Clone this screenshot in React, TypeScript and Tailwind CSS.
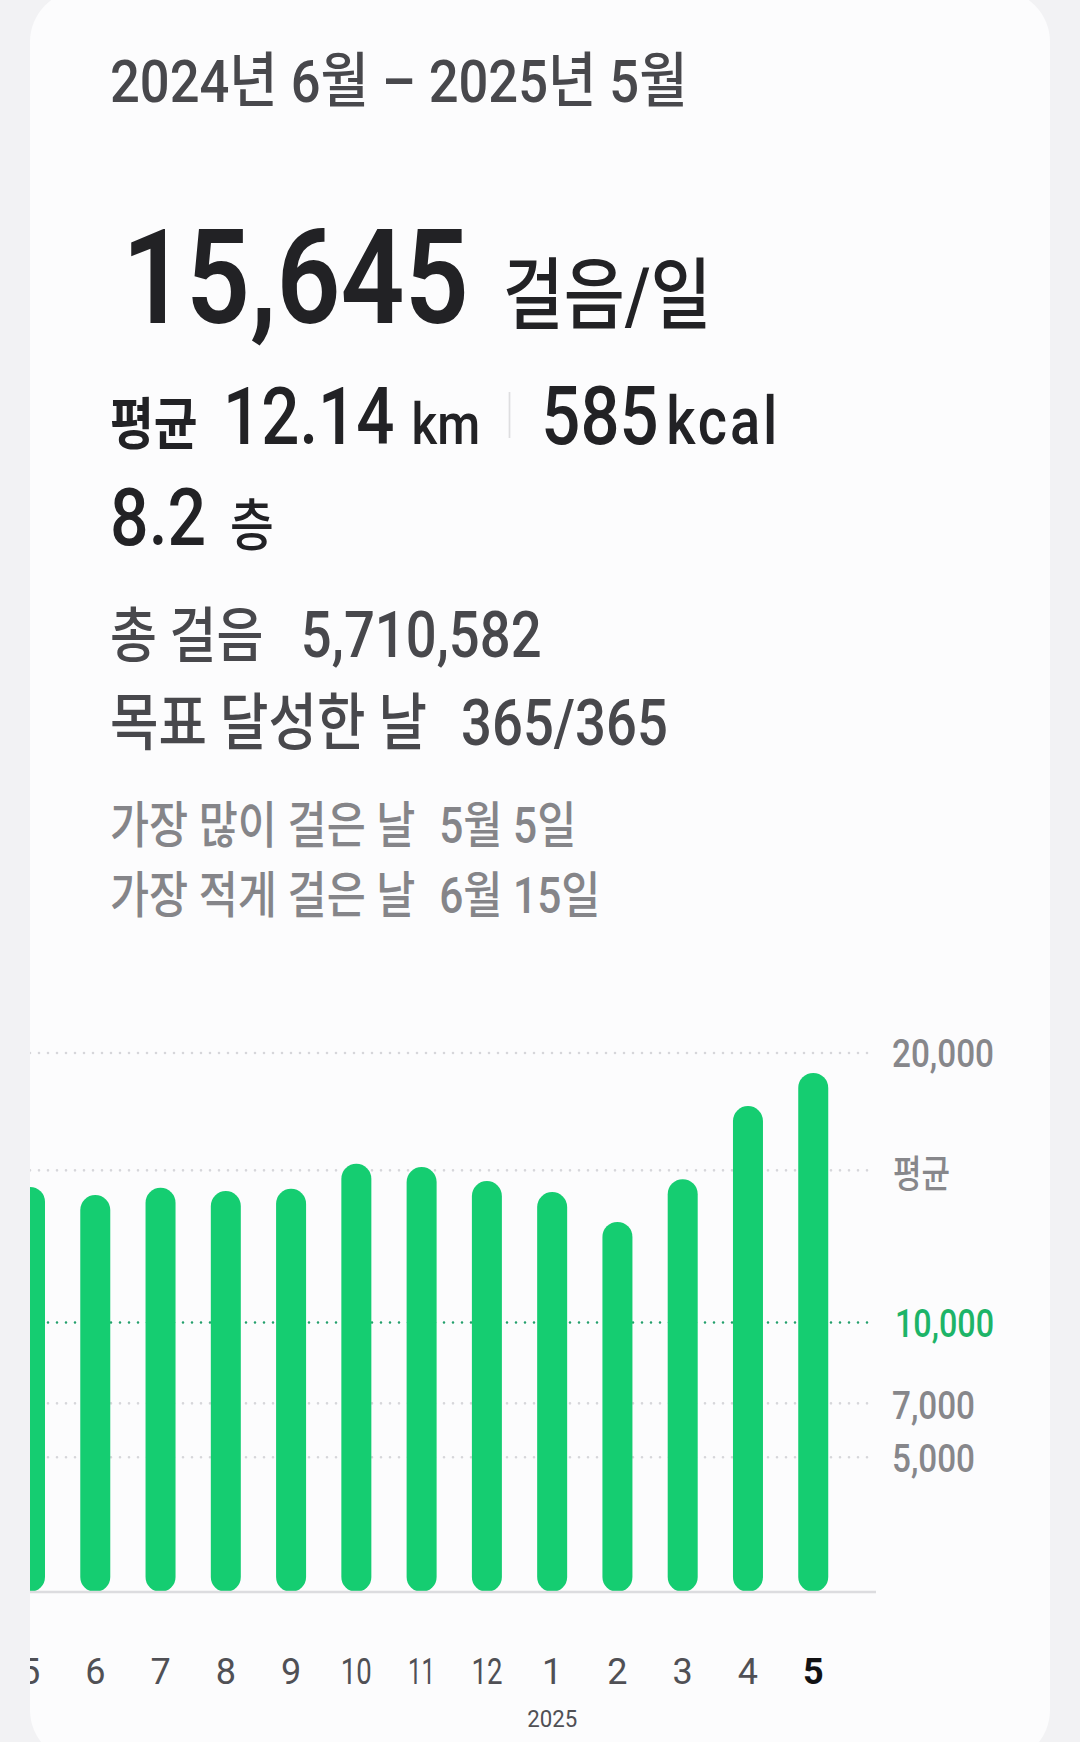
const steps = [15030, 14730, 15000, 14880, 14960, 15890, 15770, 15250, 14840, 13730, 15320, 18030, 19260];
const months = ["5", "6", "7", "8", "9", "10", "11", "12", "1", "2", "3", "4", "5"];

const BASE = 571;
const PX_PER_STEP = 539 / 20000;
const GAP = 65.27;
const y = (v: number) => BASE - v * PX_PER_STEP;

const font = "Roboto, 'Noto Sans CJK KR', sans-serif";

function Grid({ value, color }: { value: number; color: string }) {
  return (
    <line
      x1={0}
      x2={838}
      y1={y(value)}
      y2={y(value)}
      stroke={color}
      strokeWidth={2.6}
      strokeLinecap="round"
      strokeDasharray="0 9"
    />
  );
}

function Chart() {
  return (
    <svg width={1020} height={722} className="mt-[100px] block" style={{ fontFamily: font }}>
      <Grid value={20000} color="#d6d6da" />
      <Grid value={15645} color="#d6d6da" />
      <Grid value={7000} color="#d6d6da" />
      <Grid value={5000} color="#d6d6da" />
      <Grid value={10000} color="#239f6c" />

      {steps.map((v, i) => (
        <rect key={i} x={i * GAP - 15} y={y(v)} width={30} height={BASE - y(v)} rx={15} fill="#15cd71" />
      ))}
      <line x1={0} x2={846} y1={BASE} y2={BASE} stroke="#dcdcdf" strokeWidth={2.5} />

      <g fontWeight={500} fontSize={38} fill="#87878b">
        <text x={862} y={46} textLength={102} lengthAdjust="spacingAndGlyphs">20,000</text>
        <text x={863} y={166} textLength={57} lengthAdjust="spacingAndGlyphs">평균</text>
        <text x={865} y={316} fill="#1db468" textLength={99} lengthAdjust="spacingAndGlyphs">10,000</text>
        <text x={862} y={398} textLength={83} lengthAdjust="spacingAndGlyphs">7,000</text>
        <text x={862} y={451} textLength={83} lengthAdjust="spacingAndGlyphs">5,000</text>
      </g>

      <g fontSize={36} fill="#505055" textAnchor="middle">
        {months.map((m, i) => {
          const last = i === months.length - 1;
          return (
            <text
              key={i}
              x={i * GAP}
              y={663}
              fill={last ? "#111113" : undefined}
              fontWeight={last ? 700 : 400}
              textLength={m.length > 1 ? (m === "11" ? 27 : 31) : undefined}
              lengthAdjust="spacingAndGlyphs"
            >
              {m}
            </text>
          );
        })}
        <text x={8 * GAP} y={706} fontSize={24} textLength={50} lengthAdjust="spacingAndGlyphs">
          2025
        </text>
      </g>
    </svg>
  );
}

export default function App() {
  return (
    <div className="h-[1742px] overflow-hidden bg-[#f2f2f4] font-[Roboto,'Noto_Sans_CJK_KR',sans-serif]">
      <div className="mx-[30px] -mt-[10px] h-[1772px] overflow-hidden rounded-[52px] bg-[#fcfcfd]">
        <div className="pl-[80px] pt-[62px]">
          <div className="origin-left scale-x-[0.875] text-[60px] leading-none font-medium whitespace-nowrap text-[#48484c]">
            2024년 6월 – 2025년 5월
          </div>

          <div className="mt-[100px] flex origin-left scale-x-[0.85] items-baseline whitespace-nowrap text-[#222225]">
            <span className="ml-[14px] text-[132px] leading-none font-semibold">15,645</span>
            <span className="ml-[40px] text-[78px] leading-none font-medium">걸음/일</span>
          </div>

          <div className="mt-[32px] flex origin-left scale-x-[0.85] items-baseline whitespace-nowrap text-[#222225]">
            <span className="text-[56px] leading-none font-bold">평균</span>
            <span className="ml-[30px] text-[79px] leading-none font-medium">12.14</span>
            <span className="ml-[20px] text-[58px] leading-none font-medium">km</span>
            <span className="ml-[34px] mt-[16px] h-[46px] w-[2px] self-start bg-[#dedee0]" />
            <span className="ml-[36px] text-[81px] leading-none font-medium">585</span>
            <span className="ml-[9px] text-[66px] leading-none font-medium tracking-[0.05em]">kcal</span>
          </div>

          <div className="mt-[21px] flex origin-left scale-x-[0.85] items-baseline whitespace-nowrap text-[#222225]">
            <span className="text-[80px] leading-none font-medium">8.2</span>
            <span className="ml-[28px] text-[56px] leading-none font-medium">층</span>
          </div>

          <div className="mt-[46px] flex origin-left scale-x-[0.85] items-baseline whitespace-nowrap text-[#48484c]">
            <span className="text-[60px] leading-none font-medium">총 걸음</span>
            <span className="ml-[44px] text-[64px] leading-none font-medium">5,710,582</span>
          </div>
          <div className="mt-[24px] flex origin-left scale-x-[0.85] items-baseline whitespace-nowrap text-[#48484c]">
            <span className="text-[62px] leading-none font-medium">목표 달성한 날</span>
            <span className="ml-[40px] text-[64px] leading-none font-medium">365/365</span>
          </div>

          <div className="mt-[45px] flex origin-left scale-x-[0.85] items-baseline whitespace-nowrap text-[50px] leading-none font-medium text-[#858589]">
            <span>가장 많이 걸은 날</span>
            <span className="ml-[28px]">5월 5일</span>
          </div>
          <div className="mt-[20px] flex origin-left scale-x-[0.85] items-baseline whitespace-nowrap text-[50px] leading-none font-medium text-[#858589]">
            <span>가장 적게 걸은 날</span>
            <span className="ml-[28px]">6월 15일</span>
          </div>
        </div>

        <Chart />
      </div>
    </div>
  );
}
